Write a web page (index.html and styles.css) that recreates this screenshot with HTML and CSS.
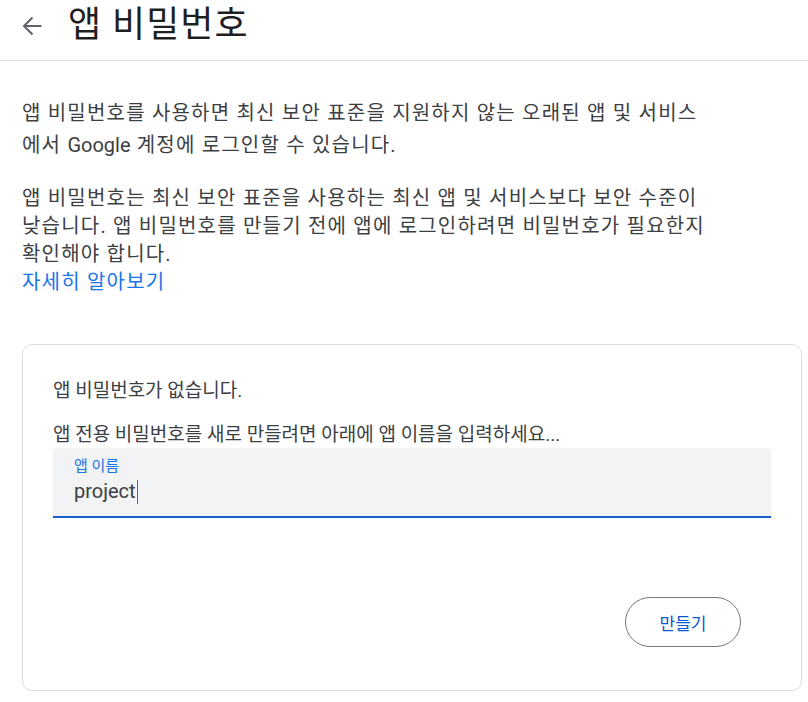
FILE: index.html
```html
<!DOCTYPE html>
<html lang="ko">
<head>
  <meta charset="utf-8">
  <meta name="viewport" content="width=device-width, initial-scale=1.0">
  <title>앱 비밀번호</title>
  <link rel="stylesheet" href="styles.css">
</head>
<body>
  <header class="top-bar">
    <button class="back-btn" aria-label="뒤로">
      <svg width="20" height="20" viewBox="0 0 20 20"><path d="M19.5 10H2M10.5 1.5L2 10l8.5 8.5" fill="none" stroke="#5f6368" stroke-width="2"/></svg>
    </button>
    <h1 class="title">앱 비밀번호</h1>
  </header>

  <main class="content">
    <p class="intro first">앱 비밀번호를 사용하면 최신 보안 표준을 지원하지 않는 오래된 앱 및 서비스<wbr>에서 <span class="latin">Google</span> 계정에 로그인할 수 있습니다.</p>
    <p class="intro">앱 비밀번호는 최신 보안 표준을 사용하는 최신 앱 및 서비스보다 보안 수준이 낮습니다. 앱 비밀번호를 만들기 전에 앱에 로그인하려면 비밀번호가 필요한지 확인해야 합니다.<br><a href="#" class="more">자세히 알아보기</a></p>

    <section class="card">
      <p class="card-text">앱 비밀번호가 없습니다.</p>
      <p class="card-text hint">앱 전용 비밀번호를 새로 만들려면 아래에 앱 이름을 입력하세요...</p>
      <div class="field">
        <span class="field-label">앱 이름</span>
        <span class="field-value">project<span class="caret"></span></span>
      </div>
      <div class="actions">
        <button class="create-btn">만들기</button>
      </div>
    </section>
  </main>
</body>
</html>
```

FILE: styles.css
```css
body {
  margin: 0;
  background-color: #fff;
  font-family: Roboto, "Noto Sans CJK KR", sans-serif;
  color: #1f1f1f;
}

.top-bar {
  display: flex;
  align-items: center;
  height: 60px;
  padding-left: 22px;
  border-bottom: 1px solid #dadce0;
}

.back-btn {
  display: flex;
  padding: 0;
  margin: -8px 26px 0 0;
  background: none;
  border: none;
  cursor: pointer;
}

.title {
  margin: 0 0 10px;
  font-size: 36px;
  font-weight: 400;
  line-height: 40px;
  letter-spacing: 1px;
  color: #1f1f1f;
}

.content {
  padding: 36px 22px 0;
}

.intro {
  margin: 0;
  max-width: 690px;
  font-size: 20px;
  line-height: 28px;
  letter-spacing: 1.2px;
  word-break: keep-all;
  color: #3c4043;
}

.intro.first {
  line-height: 32px;
  margin-bottom: 23px;
}

.latin {
  letter-spacing: 0;
}

.more {
  color: #1a73e8;
  text-decoration: none;
}

.card {
  margin: 48px -16px 0 0;
  padding: 33px 30px 43px;
  border: 1px solid #dadce0;
  border-radius: 10px;
}

.card-text {
  margin: 0 0 18px;
  font-size: 19px;
  line-height: 26px;
  color: #3c4043;
}

.card-text.hint {
  margin-bottom: 0;
}

.field {
  display: flex;
  flex-direction: column;
  height: 70px;
  padding: 8px 21px 0;
  box-sizing: border-box;
  background-color: #f1f3f4;
  border-radius: 4px 4px 0 0;
  border-bottom: 2px solid #1a5fd0;
}

.field-label {
  font-size: 15px;
  line-height: 20px;
  color: #1a73e8;
}

.field-value {
  font-size: 20px;
  line-height: 30px;
  color: #3c4043;
}

.caret {
  display: inline-block;
  width: 1px;
  height: 24px;
  margin-left: 1px;
  vertical-align: -6px;
  background-color: #1a73e8;
}

.actions {
  display: flex;
  justify-content: flex-end;
  margin-top: 79px;
  padding-right: 30px;
}

.create-btn {
  width: 116px;
  height: 50px;
  border: 1px solid #747775;
  border-radius: 25px;
  background: #fff;
  font-family: inherit;
  font-size: 17px;
  color: #0b57d0;
  cursor: pointer;
}
```
